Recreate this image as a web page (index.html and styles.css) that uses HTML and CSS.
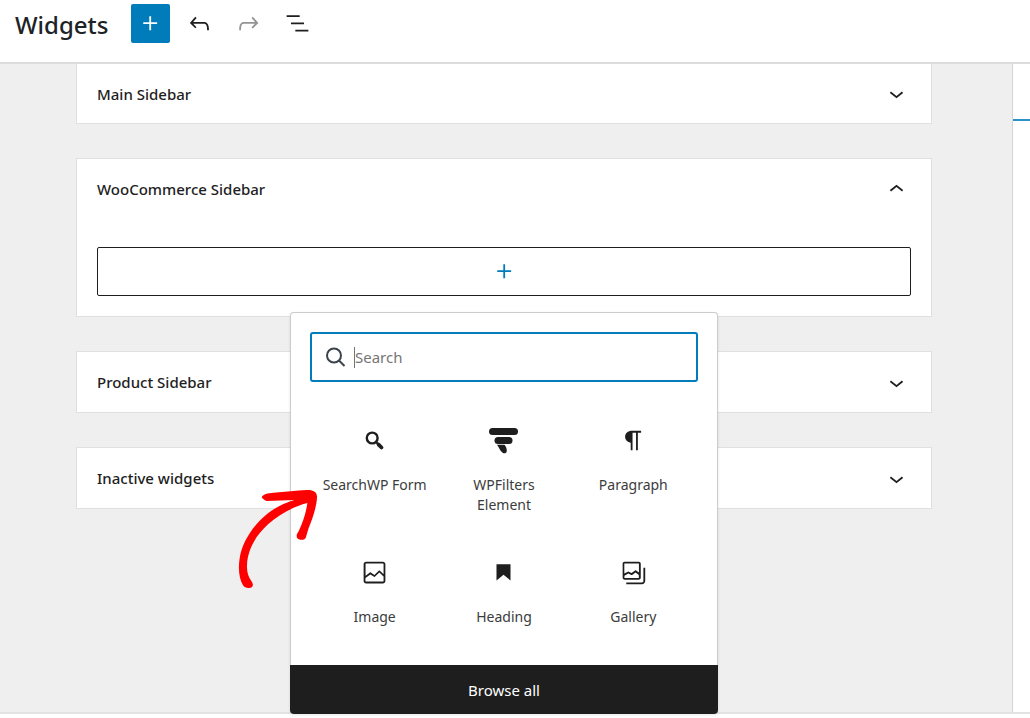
FILE: index.html
```html
<!DOCTYPE html>
<html lang="en">
<head>
  <meta charset="UTF-8">
  <title>Widgets</title>
  <link rel="stylesheet" href="styles.css">
</head>
<body>

  <header class="header">
    <h1>Widgets</h1>
    <div class="toolbar">
      <button class="tool primary" aria-label="Add block">
        <svg class="icon" viewBox="0 0 24 24"><path d="M11 12.5V17.5H12.5V12.5H17.5V11H12.5V6H11V11H6V12.5H11Z"/></svg>
      </button>
      <button class="tool" aria-label="Undo">
        <svg class="icon" viewBox="0 0 24 24"><path d="M18.3 11.7c-.6-.6-1.4-.9-2.3-.9H6.7l2.9-3.3-1.1-1-4.5 5L8.5 16l1-1-2.7-2.7H16c.5 0 .9.2 1.3.5 1 1 1 3.4 1 4.5v.3h1.5v-.2c0-1.5 0-4.3-1.5-5.7z"/></svg>
      </button>
      <button class="tool disabled" aria-label="Redo" disabled>
        <svg class="icon" viewBox="0 0 24 24"><path d="M15.6 6.5l-1.1 1 2.9 3.3H8c-.9 0-1.7.3-2.3.9-1.4 1.5-1.4 4.2-1.4 5.6v.2h1.5v-.3c0-1.1 0-3.5 1-4.5.3-.3.7-.5 1.3-.5h9.2L14.5 15l1.1 1.1 4.6-4.6-4.6-5z"/></svg>
      </button>
      <button class="tool" aria-label="List view">
        <svg class="icon" viewBox="0 0 24 24"><path d="M13.8 5.2H3v1.5h10.8V5.2zm-3.6 12v1.5H21v-1.5H10.2zm7.2-6H6.6v1.5h10.8v-1.5z"/></svg>
      </button>
    </div>
  </header>

  <div class="editor">
    <main class="areas">
      <section class="panel first">
        <button class="panel-title">
          Main Sidebar
          <svg class="icon" viewBox="0 0 24 24"><path d="M17.5 11.6L12 16l-5.5-4.4.9-1.2L12 14l4.5-3.6 1 1.2z"/></svg>
        </button>
      </section>

      <section class="panel">
        <button class="panel-title">
          WooCommerce Sidebar
          <svg class="icon" viewBox="0 0 24 24"><path d="M6.5 12.4L12 8l5.5 4.4-.9 1.2L12 10l-4.5 3.6-1-1.2z"/></svg>
        </button>
        <div class="panel-body">
          <button class="appender" aria-label="Add block">
            <svg class="icon" viewBox="0 0 24 24"><path d="M11 12.5V17.5H12.5V12.5H17.5V11H12.5V6H11V11H6V12.5H11Z"/></svg>
          </button>

          <div class="inserter">
            <div class="inserter-content">
              <div class="search">
                <svg class="icon" viewBox="0 0 29 29"><circle cx="12" cy="12.500" r="7"/><path d="M17 17.500l5.500 5.500"/></svg>
                <span class="caret"></span>
                <input type="text" placeholder="Search" aria-label="Search">
              </div>
              <div class="blocks">
                <button class="block">
                  <svg class="icon" viewBox="0 0 29 29"><g fill="none" stroke="#1e1e1e"><circle cx="12.2" cy="12" r="5.4" stroke-width="2.400"/><path d="M16 16l3 3" stroke-width="2.200"/><path d="M18.600 18.600l2.900 2.900" stroke-width="3.800" stroke-linecap="round"/></g></svg>
                  <span>SearchWP Form</span>
                </button>
                <button class="block">
                  <svg class="icon" viewBox="0 0 29 29"><rect x="0" y="2" width="29" height="7" rx="3.5"/><rect x="5.5" y="11" width="18" height="7" rx="3.5"/><path d="M8 18.8h7.5c1.6 1.8 2.4 4.2 2.3 6.2c-.1 1.8-1.7 2.7-3.3 2.2c-1.7-.5-2.8-2.3-3.9-4.2C9.8 21.5 8.8 20 8 18.8z"/></svg>
                  <span>WPFilters Element</span>
                </button>
                <button class="block">
                  <svg class="icon" viewBox="0 0 24 24"><path d="M18.3 4H9.9v-.1l-.9.2c-2.3.4-4 2.4-4 4.8s1.7 4.4 4 4.8l.7.1V20h1.5V5.5h2.9V20h1.5V5.5h2.7V4z"/></svg>
                  <span>Paragraph</span>
                </button>
                <button class="block">
                  <svg class="icon" viewBox="0 0 24 24"><path d="M19 3H5c-1.1 0-2 .9-2 2v14c0 1.1.9 2 2 2h14c1.1 0 2-.9 2-2V5c0-1.1-.9-2-2-2zM5 4.5h14c.3 0 .5.2.5.5v8.4l-3-2.9c-.3-.3-.8-.3-1 0L11.9 14 9 12c-.3-.2-.6-.2-.8 0l-3.6 2.6V5c-.1-.3.1-.5.4-.5zm14 15H5c-.3 0-.5-.2-.5-.5v-2.4l4.1-3 3 1.9c.3.2.7.2.9-.1L16 12l3.5 3.4V19c0 .3-.2.5-.5.5z"/></svg>
                  <span>Image</span>
                </button>
                <button class="block">
                  <svg class="icon" viewBox="0 0 24 24"><path d="M6.2 5.2v13.4l5.8-4.8 5.8 4.8V5.2z"/></svg>
                  <span>Heading</span>
                </button>
                <button class="block">
                  <svg class="icon" viewBox="0 0 24 24"><path d="M20.2 8v11c0 .7-.6 1.2-1.2 1.2H6v1.5h13c1.5 0 2.7-1.2 2.7-2.8V8h-1.5zM18 16.4V4.6c0-.9-.7-1.6-1.6-1.6H4.6C3.7 3 3 3.7 3 4.6v11.8c0 .9.7 1.6 1.6 1.6h11.8c.9 0 1.6-.7 1.6-1.6zM4.5 4.6c0-.1.1-.1.1-.1h11.8c.1 0 .1.1.1.1V12l-2.3-1.7c-.3-.2-.6-.2-.9 0l-2.9 2.1L8 11.3c-.2-.1-.5-.1-.7 0l-2.9 1.5V4.6zm0 11.8v-1.8l3.2-1.7 2.4 1.2c.2.1.5.1.8-.1l2.8-2 2.7 2v2.5c0 .1-.1.1-.1.1H4.6c0-.1-.1-.2-.1-.2z"/></svg>
                  <span>Gallery</span>
                </button>
              </div>
            </div>
            <button class="browse-all">Browse all</button>

            <!-- red arrow pointing at SearchWP Form -->
            <svg class="arrow" viewBox="0 0 330 390"><path d="M95 81C101 72 112 70 130 68C165 66 200 62 230 60C250 59 262 66 261 82C260 110 248 145 236 174L227 204C222 212 206 211 201 203C198 196 202 190 206 184C218 158 228 130 232 99C190 110 150 132 115 162C75 198 53 240 51 285C50 306 55 320 64 333C71 343 70 351 61 353C52 355 44 353 39 346C27 325 24 295 29 265C36 220 65 170 112 131C135 113 163 99 193 90L110 93C105 92 98 87 95 81Z"/></svg>
          </div>
        </div>
      </section>

      <section class="panel">
        <button class="panel-title">
          Product Sidebar
          <svg class="icon" viewBox="0 0 24 24"><path d="M17.5 11.6L12 16l-5.5-4.4.9-1.2L12 14l4.5-3.6 1 1.2z"/></svg>
        </button>
      </section>

      <section class="panel">
        <button class="panel-title">
          Inactive widgets
          <svg class="icon" viewBox="0 0 24 24"><path d="M17.5 11.6L12 16l-5.5-4.4.9-1.2L12 14l4.5-3.6 1 1.2z"/></svg>
        </button>
      </section>
    </main>

    <aside class="settings">
      <div class="settings-tab"></div>
    </aside>
  </div>

  <footer class="footer"></footer>

</body>
</html>
```

FILE: styles.css
```css
* {
  box-sizing: border-box;
}

body {
  margin: 0;
  min-height: 100vh;
  display: flex;
  flex-direction: column;
  font-family: "Noto Sans", "Open Sans", sans-serif;
  font-size: 15px;
  line-height: 20px;
  color: #1e1e1e;
  background-color: #fff;
}

button {
  margin: 0;
  padding: 0;
  border: none;
  background: none;
  font: inherit;
  color: inherit;
  cursor: pointer;
}

.icon {
  display: block;
  flex-shrink: 0;
  width: 29px;
  height: 29px;
  fill: currentColor;
}

.header {
  display: flex;
  align-items: flex-start;
  gap: 23px;
  height: 64px;
  padding: 4px 15px;
  border-bottom: 2px solid #dcdcdc;
}

h1 {
  margin: 0;
  font-size: 24px;
  font-weight: 500;
  line-height: 42px;
  color: #1d2327;
}

.toolbar {
  display: flex;
  gap: 10px;
}

.tool {
  display: flex;
  align-items: center;
  justify-content: center;
  width: 39px;
  height: 39px;
  border-radius: 2px;
}

.tool.primary {
  background-color: #007cba;
  color: #fff;
}

.tool.disabled {
  color: #949494;
}

.editor {
  flex: 1;
  display: flex;
}

.areas {
  flex: 1;
  display: flex;
  flex-direction: column;
  gap: 34px;
  padding: 0 80px 34px 76px;
  background-color: #efefef;
}

.panel {
  border: 1px solid #e0e0e0;
  background-color: #fff;
}

.panel.first {
  border-top: none;
}

.panel-title {
  display: flex;
  align-items: center;
  justify-content: space-between;
  width: 100%;
  height: 60px;
  padding: 0 20px;
  font-weight: 500;
  text-align: left;
}

.panel.first .panel-title {
  height: 59px;
}

.panel-body {
  position: relative;
  padding: 28px 20px 20px;
}

.appender {
  display: flex;
  align-items: center;
  justify-content: center;
  width: 100%;
  height: 49px;
  border: 1px solid #1e1e1e;
  border-radius: 2px;
  color: #007cba;
}

/* block picker under the add button */
.inserter {
  position: absolute;
  z-index: 10;
  top: 93px;
  left: 50%;
  width: 428px;
  transform: translateX(-50%);
  border-radius: 4px;
  background-color: #fff;
  box-shadow: 0 1px 3px rgba(0, 0, 0, 0.1);
}

.inserter-content {
  padding: 19px 19px 28px;
  border: 1px solid #ccc;
  border-bottom: none;
  border-radius: 4px 4px 0 0;
}

.search {
  display: flex;
  align-items: center;
  height: 50px;
  padding: 0 10px;
  border: 2px solid #007cba;
  border-radius: 3px;
}

.search .icon {
  fill: none;
  stroke: #3c434a;
  stroke-width: 2;
}

.caret {
  width: 1px;
  height: 21px;
  margin-left: 3px;
  background-color: #757575;
}

.search input {
  flex: 1;
  min-width: 0;
  padding: 0;
  border: none;
  outline: none;
  background: none;
  font: inherit;
}

.search input::placeholder {
  color: #757575;
  opacity: 1;
}

.blocks {
  display: grid;
  grid-template-columns: repeat(3, 1fr);
  row-gap: 23px;
  padding-top: 34px;
}

.block {
  display: flex;
  flex-direction: column;
  align-items: center;
  gap: 20px;
  padding: 10px;
  font-size: 14px;
}

.block span {
  color: #3c3c3c;
}

.browse-all {
  display: block;
  width: 100%;
  height: 49px;
  border-radius: 0 0 4px 4px;
  background-color: #1e1e1e;
  color: #fff;
  font-size: 15px;
}

.arrow {
  position: absolute;
  top: 158px;
  left: -60px;
  width: 110px;
  height: 130px;
  fill: #f00;
  pointer-events: none;
}

.settings {
  width: 18px;
  border-left: 1px solid #d4d4d4;
  background-color: #fff;
}

.settings-tab {
  height: 57px;
  border-bottom: 2px solid #2a93c6;
}

.footer {
  height: 6px;
  border-top: 2px solid #e2e2e2;
}
```
